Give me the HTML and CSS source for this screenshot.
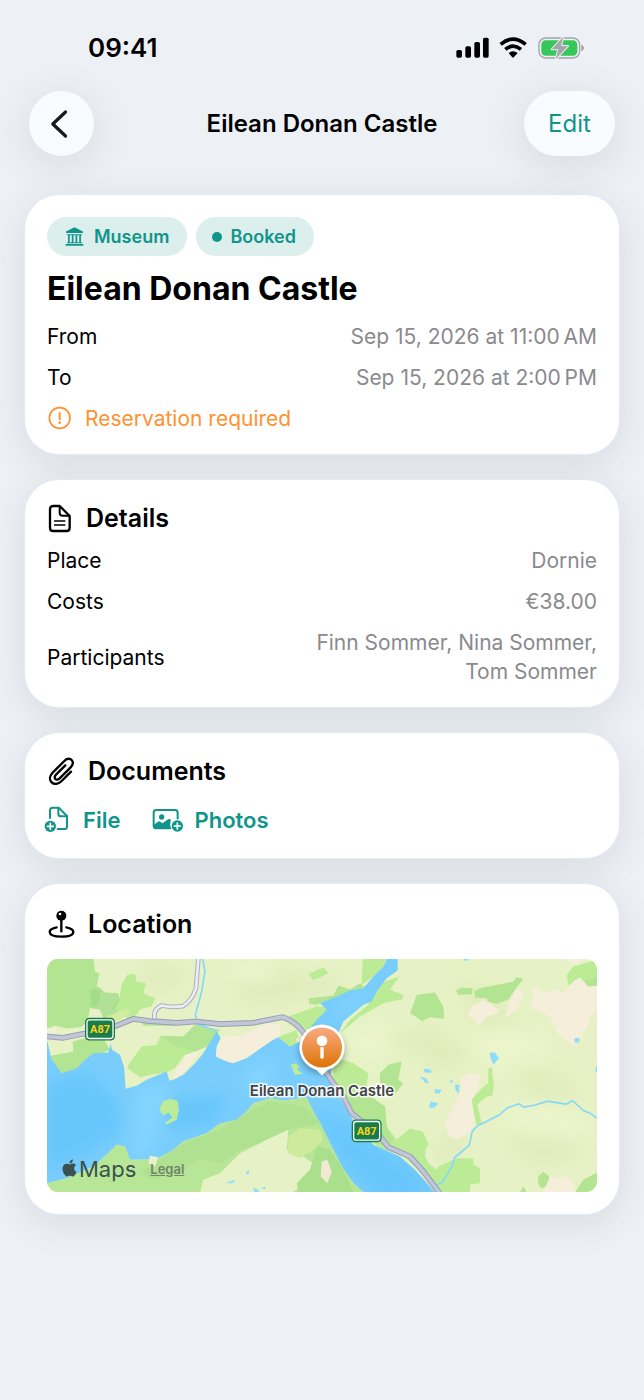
FILE: index.html
```html
<!DOCTYPE html>
<html lang="en">
<head>
<meta charset="utf-8">
<meta name="viewport" content="width=device-width, initial-scale=1">
<title>Eilean Donan Castle</title>
<link rel="stylesheet" href="styles.css">
</head>
<body>
<div class="status">
  <span class="time">09:41</span>
  <svg class="status-icons" viewBox="0 0 384 66" aria-hidden="true">
    <g>
      <rect x="1" y="39" width="17" height="23" rx="5"/>
      <rect x="28" y="28" width="17" height="34" rx="5"/>
      <rect x="55" y="15" width="17" height="47" rx="5"/>
      <rect x="81" y="2" width="17" height="60" rx="5"/>
    </g>
    <g fill="none" stroke="#000" stroke-width="11">
      <path d="M134 22Q171 -9 209 22"/>
      <path d="M148 37Q171 18 195 37"/>
    </g>
    <path d="M158 48Q171 38 185 48L174 60Q171 63 168 60Z"/>
    <rect x="249" y="3" width="122" height="60" rx="20" fill="none" stroke="#a2a4a8" stroke-width="4"/>
    <path d="M376 23Q384 26 384 33Q384 40 376 43Z" fill="#a2a4a8"/>
    <rect x="256" y="10" width="108" height="46" rx="13" fill="#35c759"/>
    <path d="M322 -1L287 37H307L299 67L336 27H315Z" fill="#a4a6aa" stroke="#edf0f5" stroke-width="6" stroke-linejoin="round" paint-order="stroke"/>
  </svg>
</div>

<header class="nav">
  <button class="round back" aria-label="Back">
    <svg viewBox="0 0 54 86" aria-hidden="true"><path d="M47 6L8 43L47 80" fill="none" stroke="#17191b" stroke-width="10" stroke-linecap="round" stroke-linejoin="round"/></svg>
  </button>
  <div class="nav-title">Eilean Donan Castle</div>
  <button class="round edit">Edit</button>
</header>

<main class="cards">
  <section class="card">
    <div class="chips">
      <span class="chip">
        <svg class="museum" viewBox="0 0 56 56" aria-hidden="true"><path d="M28 1L53 13V18H3V13ZM6 21H50V24H6ZM9 24h5v21H9zM20 24h5v21h-5zM31 24h5v21h-5zM42 24h5v21h-5zM6 45H50V48H6ZM2 50H54V55H2Z" fill="currentColor"/></svg>
        Museum
      </span>
      <span class="chip booked"><span class="dot"></span>Booked</span>
    </div>
    <h1>Eilean Donan Castle</h1>
    <dl class="rows">
      <div class="row"><dt>From</dt><dd>Sep 15, 2026 at 11:00&#8239;AM</dd></div>
      <div class="row"><dt>To</dt><dd>Sep 15, 2026 at 2:00&#8239;PM</dd></div>
    </dl>
    <p class="notice">
      <svg viewBox="0 0 75 75" aria-hidden="true"><circle cx="38" cy="36" r="31" fill="none" stroke="currentColor" stroke-width="5"/><path d="M38 21V40" stroke="currentColor" stroke-width="6" stroke-linecap="round"/><circle cx="38" cy="50" r="4" fill="currentColor"/></svg>
      Reservation required
    </p>
  </section>

  <section class="card">
    <h2 class="details-head">
      <svg class="doc" viewBox="84 70 75 87" aria-hidden="true"><g fill="none" stroke="#000" stroke-linejoin="round" stroke-linecap="round"><path d="M102 76H122L152 106V141Q152 151 142 151H103Q93 151 93 141V86Q93 76 103 76Z" stroke-width="7"/><path d="M122 78V96Q122 105 131 105H150" stroke-width="6"/><path d="M107 121H137M107 133H137" stroke-width="5"/></g></svg>
      Details
    </h2>
    <dl class="rows">
      <div class="row"><dt>Place</dt><dd>Dornie</dd></div>
      <div class="row"><dt>Costs</dt><dd>€38.00</dd></div>
      <div class="row"><dt>Participants</dt><dd>Finn Sommer, Nina Sommer, Tom Sommer</dd></div>
    </dl>
  </section>

  <section class="card spaced">
    <h2>
      <svg class="clip" viewBox="82 80 84 87" aria-hidden="true"><path d="M154 124L126 152C116 162 103 163 96 156C88 148 90 136 99 127L134 92C141 84 151 83 156 89C162 95 160 104 153 111L120 144C116 148 110 149 107 146C104 142 105 137 109 133L137 105" fill="none" stroke="#000" stroke-width="7" stroke-linecap="round" stroke-linejoin="round"/></svg>
      Documents
    </h2>
    <div class="actions">
      <button class="action">
        <svg class="file-icon" viewBox="73 233 75 81" aria-hidden="true"><g fill="none" stroke="currentColor" stroke-width="6" stroke-linejoin="round" stroke-linecap="round"><path d="M91 266V243Q91 235 99 235H117L142 260V292Q142 299 135 299H114"/><path d="M116 236V253Q116 261 124 261H141"/></g><circle cx="92" cy="291" r="17" fill="currentColor"/><path d="M92 282V300M83 291H101" stroke="#fff" stroke-width="5" stroke-linecap="round"/></svg>
        File
      </button>
      <button class="action">
        <svg class="photo-icon" viewBox="397 236 96 75" aria-hidden="true"><path d="M450 297H410Q402 297 402 289V250Q402 242 410 242H466Q474 242 474 250V270" fill="none" stroke="currentColor" stroke-width="6"/><circle cx="426" cy="263" r="8" fill="currentColor"/><path d="M402 287L415 277Q419 274 423 278L428 282L443 271Q449 267 454 272Q448 287 456 299H409Q402 298 402 290Z" fill="currentColor"/><circle cx="473" cy="290" r="17" fill="currentColor"/><path d="M473 281V299M464 290H482" stroke="#fff" stroke-width="5" stroke-linecap="round"/></svg>
        Photos
      </button>
    </div>
  </section>

  <section class="card spaced location">
    <h2>
      <svg class="pin-icon" viewBox="82 540 84 90" aria-hidden="true"><path d="M111 592Q90 596 90 606Q91 620 125 620Q161 620 161 606Q161 596 140 592" fill="none" stroke="#000" stroke-width="7" stroke-linecap="round"/><path d="M125 565V604" stroke="#000" stroke-width="7" stroke-linecap="round"/><circle cx="125" cy="557" r="15"/><circle cx="121" cy="552" r="4" fill="#fff"/></svg>
      Location
    </h2>
    <div class="map">
      <svg class="map-art" viewBox="21 27 1650 700" preserveAspectRatio="xMidYMid slice" aria-hidden="true">
        <defs>
          <linearGradient id="pinFill" x1="0" y1="0" x2="0" y2="1"><stop offset="0" stop-color="#f9aa84"/><stop offset="1" stop-color="#dd7402"/></linearGradient>
          <filter id="soft" x="-30%" y="-30%" width="160%" height="160%"><feGaussianBlur stdDeviation="22"/></filter>
          <filter id="shadow" x="-40%" y="-40%" width="180%" height="180%"><feGaussianBlur stdDeviation="9"/></filter>
          <clipPath id="waterClip"><use href="#water"/></clipPath>
          <path id="a87" d="M21 260L70 264L130 252L190 243L280 207L330 214L410 219L470 215L540 223L640 219L725 202Q745 204 775 230L810 270L860 370L880 400L910 440L935 490L1020 560L1045 592L1110 620L1150 665L1199 730"/>
          <path id="sideroad" d="M475 27L468 115Q455 155 428 169Q395 174 365 167Q335 180 346 212"/>
        </defs>
        <rect x="21" y="27" width="1650" height="700" fill="#e6f2c5"/>
        <g fill="#d6e2ad" opacity=".35" filter="url(#soft)">
          <path d="M300 40L440 60L400 130L320 110ZM700 60L860 90L930 80L850 130L660 170L570 130ZM1000 270L1180 230L1300 320L1210 370L1110 300ZM1420 340L1570 380L1620 450L1480 440ZM1370 570L1530 560L1640 610L1500 650ZM1160 600L1260 530L1280 590L1200 650ZM1240 90L1360 130L1450 220L1320 230ZM560 620L700 560L760 640L690 710Z"/>
        </g>
        <g fill="#f0f6cf" opacity=".6" filter="url(#soft)">
          <path d="M540 50L670 30L740 90L640 100ZM1280 270L1450 240L1540 310L1380 370ZM920 260L1020 210L1060 290L980 350ZM1380 480L1580 470L1660 560L1450 550Z"/>
        </g>
        <g fill="#b3e492">
          <path d="M21 27H160L165 65L178 70L168 120L182 122L178 165L150 175L142 215L122 232L82 236L45 228L21 236Z"/>
          <path d="M21 320L100 305L98 275L135 265L190 265L210 300L160 320L110 365L60 372Z"/>
          <path d="M265 345L305 290L350 285L360 260L430 260L465 225L530 238L540 262L500 290L465 305L430 320L405 355L380 368L330 375L300 382L262 355Z" fill="#bceb96"/>
          <path d="M360 258L430 260L465 225L540 240L500 290L465 305L410 290Z"/>
          <path d="M245 105L262 75L285 72L290 95L318 100L310 130L345 145L335 170L300 178L278 212L240 195L215 175L238 150Z" fill="#bceb96"/>
          <path d="M300 205L345 210L420 218L405 228H310Z"/>
          <path d="M806 72L850 52L865 70L835 85L818 90Z" fill="#bceb96"/>
          <path d="M968 27H1041L1030 50L1000 80L965 105Z" fill="#bceb96"/>
          <path d="M1010 105L1050 90L1078 80L1050 120L1090 135L1088 148L1030 160L960 200L925 230L900 250L930 210L985 165Z" fill="#bceb96"/>
          <path d="M805 145L880 137L895 108L930 118L960 100L975 112L935 130L870 150L830 165L808 162Z"/>
          <path d="M745 200L830 170L865 172L865 210L820 240L775 235Z" fill="#bceb96"/>
          <path d="M720 260L770 240L780 285L750 290L715 262Z" fill="#bceb96"/>
          <path d="M878 320L940 340L985 370L980 410L940 405L1000 450L1035 470L1040 530L1070 570L1110 535L1148 545L1165 580L1155 620L1180 650L1200 648L1250 625H1300V645L1320 655V700L1290 705V727H1190L1150 670L1090 620L1010 590L930 490L880 390Z" fill="#bceb96"/>
          <path d="M1158 590L1185 610L1178 625L1200 640L1190 660L1165 640L1155 615Z" fill="#e6f2c5"/>
          <path d="M930 400L965 420L1035 470L1040 530L1060 570L1040 590L1000 580L930 470Z"/>
          <path d="M1020 370L1045 345L1085 335L1075 390L1090 400L1060 440L1040 405L1020 400Z"/>
          <path d="M1110 190L1130 135L1185 128L1210 170L1213 207L1170 202L1145 214L1130 202Z"/>
          <path d="M1248 122L1265 114L1298 116L1295 133L1255 135ZM1303 125L1320 115L1420 95L1430 82L1450 87L1425 120L1405 150L1370 162L1345 155L1340 145L1305 143Z"/>
          <path d="M1580 75L1600 50L1660 33L1671 45V115L1640 105L1620 85L1600 105L1585 105Z" fill="#bceb96"/>
          <path d="M1628 95L1671 80V118L1645 112Z"/>
          <path d="M1345 355L1357 352V380L1362 400L1358 437L1340 440L1312 464L1325 520L1310 525L1295 468V450L1325 415L1345 400Z" fill="#bceb96"/>
          <path d="M1495 680L1510 666L1528 680L1525 705L1505 717L1494 700Z"/>
          <path d="M1605 727L1630 690L1671 668V727ZM1440 727L1450 710L1460 727Z"/>
        </g>
        <g fill="#9fdb87" opacity=".75"><path d="M150 122L175 110L195 128L235 130L240 150L225 175L235 190L205 207L190 205L180 180L155 175Z"/></g>
        <path d="M200 200L260 175L272 190L240 210L205 222Z" fill="#d1ec9e"/>
        <g fill="#f5eedb">
          <path d="M400 390L410 350L430 340L435 315L480 303L455 340L425 375Z"/>
          <path d="M525 325L530 290L545 260L600 258L680 220L722 225L720 255L670 290L620 325L575 340L540 334Z"/>
          <path d="M1282 195L1295 170L1330 150L1378 180L1370 193L1340 200L1315 227L1305 210Z"/>
          <path d="M1395 205L1405 160L1430 118L1450 125L1440 160L1430 180Z"/>
          <path d="M1470 170L1480 145L1475 110L1500 120L1520 130L1545 118L1570 130L1600 95L1620 83L1645 110L1671 108V170L1640 230L1620 265L1605 290L1555 255L1530 200Z"/>
          <path d="M1215 520L1240 470L1265 420L1260 385L1290 368L1320 375L1315 410L1295 450L1305 510L1290 550L1250 570L1225 555Z"/>
          <path d="M1510 727L1530 680L1560 685L1575 677L1600 700L1608 727Z"/>
          <path d="M1570 27H1640L1600 45Z"/>
          <path d="M21 240L48 234L45 248L21 252ZM768 265L790 262V285L770 278Z"/>
        </g>
        <path id="water" d="M21 270L35 330L65 370L110 355L135 330L160 310L205 308L212 282L216 300L240 315L252 350L257 417L290 408L320 390L380 365L388 393L402 389L430 375L465 340L490 310L505 285L520 260L530 245L542 265L530 290L527 320L560 335L580 340L620 325L670 290L700 270L715 262L750 290L780 275L830 210L860 180L840 160L890 140L930 122L970 115L1000 80L1030 50L1042 27H1073V62L1040 85L1010 125L995 155L970 165L940 190L910 215L895 250L880 330L870 390L910 460L945 520L1000 585L1080 620L1125 660L1185 727H970L940 700L905 650L875 590L840 520L815 475L800 443L730 452L690 445L640 460L620 485L590 510L540 522L500 550L430 575L400 600L350 628L270 630L255 590L230 585L200 615L160 650L80 685L21 700Z" fill="#78cdfc"/>
        <g clip-path="url(#waterClip)"><g filter="url(#soft)"><path d="M21 400L140 370L230 450L240 540L160 600L21 660ZM400 450L560 440L520 520L380 540ZM820 470L920 520L1010 600L1110 650L1185 740H1000L900 620Z" fill="#62c4fb" opacity=".8"/><path d="M290 400H400L330 620H270ZM620 350L710 330L700 400L600 430ZM900 160L990 120L920 210Z" fill="#8fdbff" opacity=".5"/></g></g>
        <path d="M21 700L80 685L160 650L200 615L230 585L255 590L270 630L330 630L350 628L400 600L430 575L500 550L540 522L590 510L620 485L640 460L690 445L730 452L800 443L815 475L840 520L875 590L905 650L940 700L970 727H21Z" fill="#b7e796"/>
        <path d="M400 600L450 570L530 545L580 515L620 490L690 455L790 470L840 520L740 540L690 570L600 600L540 640L480 625L430 660L340 690L300 670Z" fill="#a9dc8b" opacity=".5"/>
        <path d="M480 727L490 690L540 670L600 610L680 570L745 540L740 600L790 620L820 640L815 680L760 727Z" fill="#e6f2c5"/>
        <path d="M745 560L780 535L840 540L850 570L825 595L780 625L745 610Z" fill="#cdea9d"/>
        <path d="M770 700L810 660L830 590L870 600L910 660L940 727H775Z" fill="#aadf8b"/>
        <path d="M845 635L862 630L875 665L862 700L842 680Z" fill="#f1e9d3"/>
        <path d="M330 618L355 622L345 650L325 640Z" fill="#e9f1ce"/>
        <path d="M358 480L368 455L390 447L412 453L417 480L410 510L380 524L375 518L397 503L385 488L370 498Z" fill="#bdec99"/>
        <path d="M752 345L768 340L778 350L772 360L790 372L765 375Z" fill="#bdec99"/>
        <g fill="#8ddcfd">
          <path d="M1348 309L1365 308L1377 325L1360 344L1352 325ZM1150 357L1172 359L1175 368L1155 369ZM1140 380L1158 385L1167 402L1155 398ZM1183 418L1205 420L1198 431L1186 431ZM1172 455L1195 460L1183 474L1167 473ZM1228 391L1240 392L1235 400ZM1245 405L1258 405L1256 432L1246 420ZM1604 265L1618 264V277L1604 279ZM1268 27H1288L1278 34ZM1671 345L1664 365H1671ZM556 700L588 689L578 700ZM617 667L628 661L625 676ZM638 715L650 717L660 727H645ZM664 714L678 711L675 719Z"/>
        </g>
        <g fill="none" stroke="#86d8fb" stroke-width="5" stroke-linejoin="round">
          <path d="M488 27L495 65L485 125L466 195L475 225L500 232L530 245"/>
          <path d="M1185 707L1207 697L1233 655L1244 623L1288 586L1297 544L1315 526L1335 517L1380 494L1402 474L1437 462L1450 472L1480 467L1524 454L1578 463L1598 452L1630 482L1650 490L1671 505"/>
        </g>
        <g fill="none" stroke-linejoin="round">
          <use href="#sideroad" stroke="#adb0c2" stroke-width="14"/>
          <use href="#sideroad" stroke="#ebecf4" stroke-width="8"/>
          <use href="#a87" stroke="#989db3" stroke-width="17"/>
          <use href="#a87" stroke="#c1c6d8" stroke-width="11"/>
        </g>
        <g class="shields">
          <rect x="135" y="204" width="90" height="68" rx="13" fill="#187c4b"/><rect x="141" y="210" width="78" height="56" rx="8" fill="#187c4b" stroke="#fff" stroke-width="4"/><text x="180" y="250">A87</text>
          <rect x="935" y="509" width="90" height="68" rx="13" fill="#187c4b"/><rect x="941" y="515" width="78" height="56" rx="8" fill="#187c4b" stroke="#fff" stroke-width="4"/><text x="980" y="555">A87</text>
        </g>
        <circle cx="846" cy="304" r="68" opacity=".3" filter="url(#shadow)"/>
        <path d="M846 224A69 69 0 0 1 873 356L862 361L846 377L830 361L819 356A69 69 0 0 1 846 224Z" fill="#fff"/>
        <circle cx="846" cy="293" r="60" fill="url(#pinFill)"/>
        <circle cx="846" cy="273" r="16" fill="#fff"/><path d="M841 292H851V324Q846 330 841 324Z" fill="#fff"/>
      </svg>
      <span class="place-label">Eilean Donan Castle</span>
      <div class="attribution">
        <span class="brand"><svg viewBox="0 0 24 24" aria-hidden="true"><path fill="currentColor" d="M12.152 6.896c-.948 0-2.415-1.078-3.96-1.04-2.04.027-3.91 1.183-4.961 3.014-2.117 3.675-.546 9.103 1.519 12.09 1.013 1.454 2.208 3.09 3.792 3.039 1.52-.065 2.09-.987 3.935-.987 1.831 0 2.35.987 3.96.948 1.637-.026 2.676-1.48 3.676-2.948 1.156-1.688 1.636-3.325 1.662-3.415-.039-.013-3.182-1.221-3.22-4.857-.026-3.04 2.48-4.494 2.597-4.559-1.429-2.09-3.623-2.324-4.39-2.376-2-.156-3.675 1.09-4.61 1.09zM15.53 3.83c.843-1.012 1.4-2.427 1.245-3.83-1.207.052-2.662.805-3.532 1.818-.78.896-1.454 2.338-1.273 3.714 1.338.104 2.715-.688 3.559-1.701"/></svg>Maps</span>
        <a class="legal" href="#legal">Legal</a>
      </div>
    </div>
  </section>
</main>
</body>
</html>
```
FILE: styles.css
```css
* { box-sizing: border-box; }

body {
  margin: 0;
  min-height: 100vh;
  background: #edf0f5;
  color: #000;
  font-family: Inter, "Liberation Sans", sans-serif;
  font-size: 21px;
  line-height: 29px;
}

h1, h2, p, dl, dd { margin: 0; }

button {
  border: 0;
  padding: 0;
  background: none;
  font: inherit;
  color: #10958a;
  cursor: pointer;
}

svg { display: block; flex: none; overflow: visible; }

.status {
  display: flex;
  justify-content: space-between;
  align-items: center;
  height: 91px;
  padding: 4px 60px 0 88px;
}
.time { font-size: 26px; font-weight: 600; }
.status-icons { width: 128px; height: 22px; }

.nav {
  position: relative;
  display: flex;
  justify-content: space-between;
  align-items: center;
  padding: 0 29px;
}
.nav-title {
  position: absolute;
  left: 0;
  right: 0;
  text-align: center;
  font-size: 24px;
  font-weight: 600;
  pointer-events: none;
}
.round {
  display: flex;
  align-items: center;
  justify-content: center;
  height: 65px;
  border-radius: 33px;
  background: #f9fcff;
  box-shadow: 0 8px 40px rgba(60, 75, 75, .13);
}
.back { width: 65px; padding-right: 5px; }
.back svg { width: 18px; height: 28px; }
.edit { width: 91px; font-size: 24px; }

.cards {
  display: flex;
  flex-direction: column;
  gap: 26px;
  padding: 39px 25px 60px;
}
.card {
  display: flex;
  flex-direction: column;
  gap: 12px;
  padding: 22px 22px 21px;
  border-radius: 34px;
  background: #fff;
  box-shadow: 0 0 0 1px #e3eaf4, 0 8px 36px rgba(60, 75, 80, .12);
}
.spaced { gap: 16px; }

.chips { display: flex; gap: 9px; }
.chip {
  display: flex;
  align-items: center;
  gap: 10px;
  height: 39px;
  padding: 0 18px;
  border-radius: 20px;
  background: #dcefed;
  color: #10958a;
  font-size: 18px;
  font-weight: 600;
}
.booked { gap: 8px; padding: 0 18px 0 16px; }
.museum { width: 19px; height: 19px; }
.dot { width: 10px; height: 10px; border-radius: 50%; background: currentColor; }

h1 { font-size: 32px; line-height: 42px; font-weight: 700; }
h2 {
  display: flex;
  align-items: center;
  gap: 13px;
  font-size: 25px;
  line-height: 32px;
  font-weight: 600;
}

.rows { display: flex; flex-direction: column; gap: 12px; }
.row {
  display: flex;
  justify-content: space-between;
  align-items: center;
  gap: 24px;
}
.row dd { max-width: 300px; text-align: right; color: #8a8a8e; }

.notice {
  display: flex;
  align-items: center;
  gap: 13px;
  color: #ff9230;
}
.notice svg { width: 25px; height: 25px; }

.details-head { gap: 14px; }
.doc { width: 25px; height: 29px; }
.clip { width: 28px; height: 29px; }
.pin-icon { width: 28px; height: 30px; }
.location { padding-bottom: 22px; }
.location h2 { line-height: 37px; }

.actions { display: flex; gap: 32px; }
.action {
  display: flex;
  align-items: center;
  height: 34px;
  gap: 10px;
  font-size: 22px;
  font-weight: 600;
}
.action:first-child { gap: 14px; margin-left: -3px; }
.file-icon { width: 25px; height: 27px; }
.photo-icon { width: 32px; height: 25px; }

.map {
  position: relative;
  overflow: hidden;
  aspect-ratio: 550 / 233;
  border-radius: 11px;
}
.map-art { width: 100%; height: 100%; }
.shields text {
  fill: #ffd31a;
  font-family: Roboto, sans-serif;
  font-size: 33px;
  font-weight: 700;
  text-anchor: middle;
}
.place-label {
  position: absolute;
  top: 53%;
  left: 0;
  right: 0;
  text-align: center;
  font-size: 15px;
  line-height: 18px;
  font-weight: 600;
  color: #414447;
  paint-order: stroke;
  -webkit-text-stroke: 3px rgba(255, 255, 255, .85);
}
.attribution {
  position: absolute;
  left: 14px;
  bottom: 8px;
  display: flex;
  align-items: center;
  gap: 14px;
}
.brand {
  display: flex;
  align-items: center;
  gap: 1px;
  color: #3a5150;
  font-size: 22px;
}
.brand svg { width: 17px; height: 18px; margin-bottom: 4px; }
.legal { font-size: 13px; font-weight: 600; color: #6f8468; }
```
